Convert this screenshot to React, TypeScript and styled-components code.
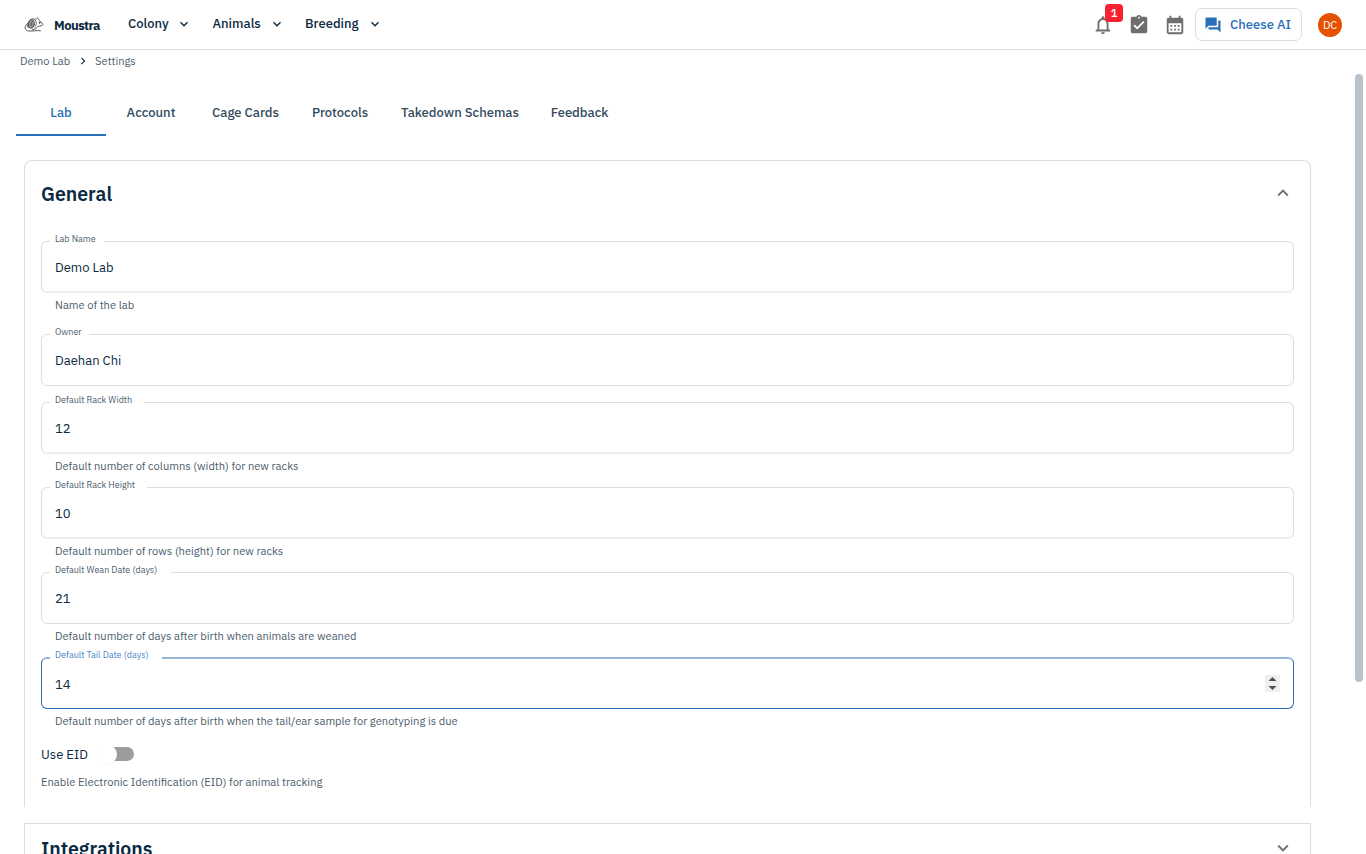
import React from "react";
import styled, { createGlobalStyle, css } from "styled-components";
import {
  MdNotificationsNone,
  MdAssignmentTurnedIn,
  MdCalendarMonth,
  MdForum,
  MdKeyboardArrowDown,
  MdKeyboardArrowRight,
  MdExpandLess,
  MdExpandMore,
} from "react-icons/md";

const ink = "#0b2a42";
const muted = "#4a5c6c";
const blue = "#2a6fb8";
const line = "#d9dee2";

const GlobalStyle = createGlobalStyle`
  *, *::before, *::after { box-sizing: border-box; }
  body {
    margin: 0;
    background: #fff;
    color: ${ink};
    font-family: "IBM Plex Sans", "Noto Sans", "Liberation Sans", sans-serif;
    font-size: 13px;
    overflow: hidden;
  }
`;

const Page = styled.div`
  position: relative;
  height: 854px;
  width: 1366px;
  overflow: hidden;
`;

const Header = styled.header`
  display: flex;
  align-items: center;
  height: 50px;
  padding: 0 24px;
  border-bottom: 1px solid #dcdcdc;
`;

const Brand = styled.div`
  display: flex;
  align-items: center;
  width: 104px;
  gap: 10px;
  font-size: 13px;
  font-weight: 700;
  letter-spacing: -0.52px;
  span { padding-top: 1px; }
`;

const NavItem = styled.a<{ $w: number }>`
  display: flex;
  justify-content: space-between;
  align-items: center;
  width: ${(p) => p.$w}px;
  margin-right: 20.5px;
  font-weight: 500;
  line-height: 18px;
  white-space: nowrap;
  padding-bottom: 2px;
`;

const Actions = styled.div`
  display: flex;
  align-items: center;
  margin-left: auto;
  color: #6e6e6e;
`;

const IconButton = styled.div`
  position: relative;
  display: flex;
  margin-right: 14px;
`;

const Badge = styled.span`
  position: absolute;
  top: -10px;
  right: -9px;
  width: 18px;
  height: 18px;
  border-radius: 4px;
  background: #f8212f;
  color: #fff;
  font-size: 11px;
  font-weight: 600;
  line-height: 18px;
  text-align: center;
`;

const AiButton = styled.button`
  display: flex;
  align-items: center;
  gap: 8px;
  width: 107px;
  height: 33px;
  margin: 0 16px 0 -5px;
  padding: 0 0 0 8px;
  border: 1px solid ${line};
  border-radius: 7px;
  background: #fff;
  color: ${blue};
  font: 500 13px "IBM Plex Sans", "Noto Sans", sans-serif;
  white-space: nowrap;
`;

const Avatar = styled.div`
  width: 24px;
  height: 24px;
  border-radius: 50%;
  background: #e65100;
  color: #fff;
  font-size: 11px;
  line-height: 25px;
  text-align: center;
`;

const Crumbs = styled.nav`
  display: flex;
  align-items: center;
  height: 21px;
  padding-left: 20px;
  font-size: 11.14px;
  color: ${muted};
  svg { color: ${ink}; margin: 0 5.500px 0 5.500px; }
`;

const Tabs = styled.div`
  display: flex;
  height: 46px;
  margin: 19px 0 0 16px;
`;

const Tab = styled.div<{ $w: number; $active?: boolean }>`
  width: ${(p) => p.$w}px;
  line-height: 46px;
  text-align: center;
  font-weight: 500;
  white-space: nowrap;
  color: ${(p) => (p.$active ? blue : "#324a5e")};
  border-bottom: 2px solid ${(p) => (p.$active ? blue : "transparent")};
`;

const Panel = styled.section<{ $first?: boolean }>`
  width: 1287px;
  height: ${(p) => (p.$first ? 647 : 60)}px;
  margin: ${(p) => (p.$first ? "24px 0 16px 24px" : "0 0 0 24px")};
  padding: 0 16px;
  border: 1px solid ${line};
  ${(p) => p.$first && css`border-bottom: 0; border-radius: 8px 8px 0 0;`}
`;

const PanelHead = styled.div<{ $h: number; $gap?: number }>`
  display: flex;
  align-items: center;
  justify-content: space-between;
  height: ${(p) => p.$h}px;
  margin-bottom: ${(p) => p.$gap ?? 0}px;
  color: #707070;
  svg { margin: 0 0.5px 2px 0; }
`;

const Title = styled.h2`
  margin: 0;
  font-size: 19.5px;
  font-weight: 600;
  line-height: 26px;
  color: ${ink};
`;

const FieldRow = styled.div<{ $pitch: number }>`
  height: ${(p) => p.$pitch}px;
`;

const Box = styled.div<{ $focus?: boolean; $soft?: boolean }>`
  position: relative;
  display: flex;
  align-items: center;
  justify-content: space-between;
  width: 1253px;
  height: 52px;
  padding: 1px 13px 0;
  border: 1px solid ${(p) => (p.$focus ? blue : line)};
  border-radius: 6px;
  ${(p) => p.$soft && css`border-bottom: 2px solid #eceef0; padding-top: 2px;`}
  ${(p) => p.$focus && css`border-top: 2px solid #93b6db;`}
`;

const Label = styled.label<{ $w: number; $focus?: boolean }>`
  position: absolute;
  left: 8px;
  top: ${(p) => (p.$focus ? -10 : -9)}px;
  width: ${(p) => p.$w}px;
  height: 12px;
  padding-left: 5px;
  background: #fff;
  font-size: 9px;
  line-height: 12px;
  white-space: nowrap;
  color: ${(p) => (p.$focus ? "#4a86c5" : muted)};
`;

const Helper = styled.p<{ $flush?: boolean }>`
  margin: 0;
  padding: ${(p) => (p.$flush ? "11px 0 0" : "5px 0 0 14px")};
  font-size: 11.15px;
  line-height: 15px;
  color: ${muted};
`;

const Spinner = styled.span`
  display: flex;
  flex-direction: column;
  align-items: center;
  justify-content: space-between;
  width: 15px;
  height: 17px;
  margin-bottom: 1px;
  padding: 2px 0;
  background: #efefef;
`;

const Arrow = styled.i<{ $down?: boolean }>`
  border-left: 4px solid transparent;
  border-right: 4px solid transparent;
  transform: translateX(-0.5px);
  ${(p) => p.$down
    ? css`border-top: 4px solid #505050;`
    : css`border-bottom: 4px solid #505050;`}
`;

const SwitchRow = styled.div`
  display: flex;
  align-items: center;
  gap: 20px;
  height: 20px;
`;

const Track = styled.span`
  position: relative;
  width: 26px;
  height: 14px;
  margin-bottom: 1px;
  border-radius: 7px;
  background: #9c9c9c;
  &::after {
    content: "";
    position: absolute;
    left: -10px;
    top: -2px;
    width: 19px;
    height: 19px;
    border-radius: 50%;
    background: #fff;
    box-shadow: 0 1px 1px rgba(0, 0, 0, 0.04);
  }
`;

const ScrollThumb = styled.div`
  position: absolute;
  left: 1355px;
  top: 74px;
  width: 8px;
  height: 608px;
  border-radius: 4px;
  background: #bbc3ca;
`;

const MouseLogo = () => (
  <svg width="20" height="16" viewBox="0 0 20 16" fill="none" stroke="#484848" strokeWidth="0.9" strokeLinecap="round">
    <path d="M4 10.5C2.5 6.500 5.500 2 9 1.800L11 2.500C12.500.6 14.700.7 14.800 3.200L19.200 7.300C18 9 16 9.300 14 9.300C13 11 11 12.500 8.500 12.700" />
    <ellipse cx="7.300" cy="7" rx="2.900" ry="4.300" fill="#999" transform="rotate(10 7.300 7)" />
    <path d="M8.200 4.800C6.700 4.800 6.300 8 7.600 9M11 3C13 5 12.500 8 11 10M3.500 6.500C-.5 10 .5 13.500 5 14C9 14.500 12 13 16.500 13.800" />
    <circle cx="15.500" cy="5.800" r=".5" fill="#222" />
  </svg>
);

const fields = [
  { label: "Lab Name", value: "Demo Lab", help: "Name of the lab", notch: 54, pitch: 93, soft: true },
  { label: "Owner", value: "Daehan Chi", help: "", notch: 39, pitch: 68 },
  { label: "Default Rack Width", value: "12", help: "Default number of columns (width) for new racks", notch: 94, pitch: 85, soft: true },
  { label: "Default Rack Height", value: "10", help: "Default number of rows (height) for new racks", notch: 97, pitch: 85, soft: true },
  { label: "Default Wean Date (days)", value: "21", help: "Default number of days after birth when animals are weaned", notch: 121, pitch: 85 },
  { label: "Default Tail Date (days)", value: "14", help: "Default number of days after birth when the tail/ear sample for genotyping is due", notch: 112, pitch: 87, focus: true },
];

const tabs: [string, number][] = [
  ["Lab", 90],
  ["Account", 90],
  ["Cage Cards", 99],
  ["Protocols", 90],
  ["Takedown Schemas", 150],
  ["Feedback", 89],
];

const nav: [string, number][] = [
  ["Colony", 64],
  ["Animals", 72],
  ["Breeding", 77.5],
];

export default function App() {
  return (
    <Page>
      <GlobalStyle />
      <Header>
        <Brand><MouseLogo /><span>Moustra</span></Brand>
        {nav.map(([name, w]) => (
          <NavItem key={name} $w={w}>{name}<MdKeyboardArrowDown size={16} /></NavItem>
        ))}
        <Actions>
          <IconButton><MdNotificationsNone size={22} /><Badge>1</Badge></IconButton>
          <IconButton><MdAssignmentTurnedIn size={22} /></IconButton>
          <IconButton><MdCalendarMonth size={22} /></IconButton>
          <AiButton><MdForum size={18} />Cheese AI</AiButton>
          <Avatar>DC</Avatar>
        </Actions>
      </Header>
      <Crumbs>
        <span>Demo Lab</span><MdKeyboardArrowRight size={14} /><span>Settings</span>
      </Crumbs>
      <Tabs>
        {tabs.map(([name, w], i) => (
          <Tab key={name} $w={w} $active={i === 0}>{name}</Tab>
        ))}
      </Tabs>
      <Panel $first>
        <PanelHead $h={66} $gap={14}>
          <Title>General</Title>
          <MdExpandLess size={22} />
        </PanelHead>
        {fields.map((f) => (
          <FieldRow key={f.label} $pitch={f.pitch}>
            <Box $focus={f.focus} $soft={f.soft}>
              <Label $w={f.notch} $focus={f.focus}>{f.label}</Label>
              <span>{f.value}</span>
              {f.focus && <Spinner><Arrow /><Arrow $down /></Spinner>}
            </Box>
            {f.help && <Helper>{f.help}</Helper>}
          </FieldRow>
        ))}
        <SwitchRow>Use EID<Track /></SwitchRow>
        <Helper $flush>Enable Electronic Identification (EID) for animal tracking</Helper>
      </Panel>
      <Panel>
        <PanelHead $h={50}>
          <Title>Integrations</Title>
          <MdExpandMore size={22} />
        </PanelHead>
      </Panel>
      <ScrollThumb />
    </Page>
  );
}
